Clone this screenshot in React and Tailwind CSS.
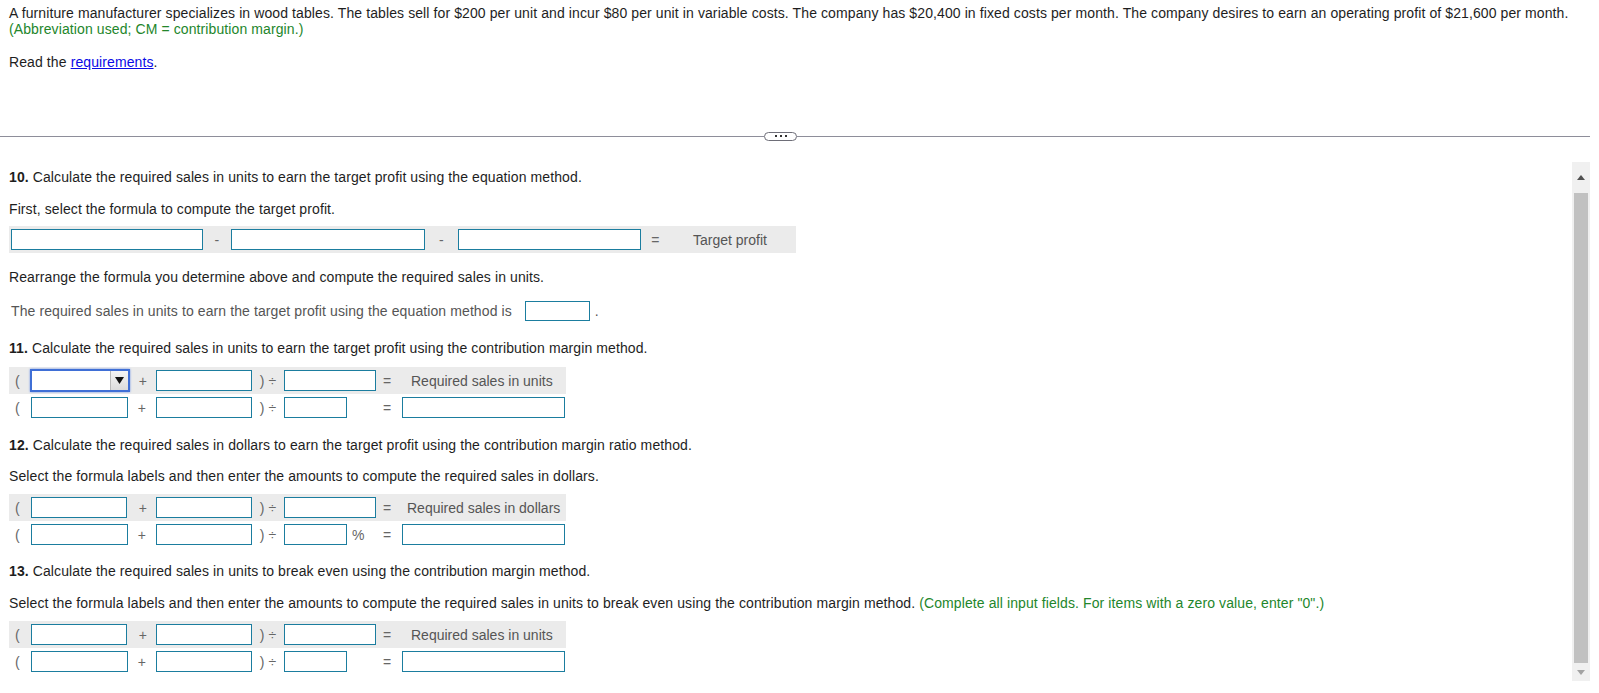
import React from "react";

const Box = ({ w, h = "h-[21px]" }) => (
  <div className={`${w} ${h} border border-[#1b7d9f] bg-white shrink-0`} />
);

const Op = ({ w, children, cls = "justify-center" }) => (
  <div className={`${w} flex ${cls} shrink-0 text-[#666]`}>{children}</div>
);

function SelectBox() {
  return (
    <div className="w-[100px] h-[23px] shrink-0 border-2 border-[#3f6fd6] bg-white flex justify-end shadow-[0_0_2px_#6f93e6]">
      <div className="w-[18px] h-full bg-gradient-to-b from-[#f4f4f4] to-[#dcdcdc] border-l border-[#b9b9b9] flex items-center justify-center">
        <svg width="9" height="7" viewBox="0 0 9 7">
          <polygon points="0,0 9,0 4.5,7" fill="#111" />
        </svg>
      </div>
    </div>
  );
}

// top line of a CM formula (gray row)
function FormulaTop({ label, labelPad = "pl-[9px]", first }) {
  return (
    <div className="w-[557px] h-[27px] bg-[#ebebeb] flex items-center">
      <Op w="w-[21px]" cls="pl-[6px]">(</Op>
      {first || <Box w="w-[96px] ml-[1px] mr-[3px]" />}
      <Op w="w-[26px]">+</Op>
      <Box w="w-[96px]" />
      <Op w="w-[32px]">)&nbsp;÷</Op>
      <Box w="w-[92px]" />
      <Op w="w-[26px]" cls="pl-[7px]">=</Op>
      <div className={`${labelPad} text-[#555] whitespace-nowrap tracking-normal`}>{label}</div>
    </div>
  );
}

function FormulaBottom({ pct }) {
  return (
    <div className="w-[557px] h-[27px] flex items-center">
      <Op w="w-[22px]" cls="pl-[6px]">(</Op>
      <Box w="w-[97px]" />
      <Op w="w-[28px]">+</Op>
      <Box w="w-[96px]" />
      <Op w="w-[32px]">)&nbsp;÷</Op>
      <Box w="w-[63px]" />
      <Op w="w-[29px]" cls="pl-[5px] justify-start">{pct ? "%" : ""}</Op>
      <Op w="w-[26px]" cls="pl-[7px]">=</Op>
      <Box w="w-[163px]" />
    </div>
  );
}

function Scrollbar() {
  return (
    <div className="w-[18px] h-full bg-[#f0f0f0] flex flex-col items-center">
      <div className="h-[31px] flex items-center justify-center">
        <svg width="8" height="5" viewBox="0 0 8 5">
          <polygon points="4,0 8,5 0,5" fill="#505050" />
        </svg>
      </div>
      <div className="w-[14px] flex-1 bg-[#c1c1c1]" />
      <div className="h-[18px] flex items-center justify-center">
        <svg width="8" height="5" viewBox="0 0 8 5">
          <polygon points="0,0 8,0 4,5" fill="#a3a3a3" />
        </svg>
      </div>
    </div>
  );
}

export default function App() {
  return (
    <div className="w-[1599px] h-[693px] bg-white overflow-hidden font-['Liberation_Sans',Arial,sans-serif] text-[14px] leading-[16px] tracking-[0.1px] text-[#1e1e1e]">
      <div className="h-[130px] pl-[9px] pt-[5px]">
        <p>
          A furniture manufacturer specializes in wood tables. The tables sell for $200 per unit and incur $80 per unit in
          variable costs. The company has $20,400 in fixed costs per month. The company desires to earn an operating profit
          of $21,600 per month.
        </p>
        <p className="text-[#23862b]">(Abbreviation used; CM = contribution margin.)</p>
        <p className="mt-[17px]">
          Read the <span className="text-[#0a0ae6] underline">requirements</span>.
        </p>
      </div>

      <div className="w-[1590px] h-[12px] flex items-center">
        <div className="w-[764px] h-px bg-[#8e8e9a]" />
        <div className="w-[33px] h-[9px] rounded-full border border-[#6e6e78] bg-white flex items-center justify-center gap-[3px]">
          <span className="w-[2px] h-[2px] bg-[#333]" />
          <span className="w-[2px] h-[2px] bg-[#333]" />
          <span className="w-[2px] h-[2px] bg-[#333]" />
        </div>
        <div className="flex-1 h-px bg-[#8e8e9a]" />
      </div>

      <div className="mt-[20px] w-[1590px] h-[519px] flex">
        <div className="flex-1 overflow-hidden pt-[7px] pl-[9px]">
          <p>
            <b>10.</b> Calculate the required sales in units to earn the target profit using the equation method.
          </p>
          <p className="mt-[16px]">First, select the formula to compute the target profit.</p>
          <div className="mt-[9px] w-[787px] h-[27px] bg-[#ebebeb] flex items-center pl-[2px]">
            <Box w="w-[192px]" />
            <Op w="w-[28px]">-</Op>
            <Box w="w-[194px]" />
            <Op w="w-[33px]">-</Op>
            <Box w="w-[183px]" />
            <Op w="w-[29px]">=</Op>
            <div className="pl-[23px] text-[#555] tracking-normal">Target profit</div>
          </div>
          <p className="mt-[16px]">Rearrange the formula you determine above and compute the required sales in units.</p>
          <div className="mt-[16px] h-[20px] flex items-center pl-[2px] text-[#555]">
            <span>The required sales in units to earn the target profit using the equation method is</span>
            <Box w="w-[65px] ml-[13px]" h="h-[20px]" />
            <span className="ml-[5px]">.</span>
          </div>
          <p className="mt-[19px]">
            <b>11.</b> Calculate the required sales in units to earn the target profit using the contribution margin method.
          </p>
          <div className="mt-[11px]">
            <FormulaTop label="Required sales in units" first={<SelectBox />} />
            <FormulaBottom />
          </div>
          <p className="mt-[16px]">
            <b>12.</b> Calculate the required sales in dollars to earn the target profit using the contribution margin ratio
            method.
          </p>
          <p className="mt-[15px]">Select the formula labels and then enter the amounts to compute the required sales in dollars.</p>
          <div className="mt-[10px]">
            <FormulaTop label="Required sales in dollars" labelPad="pl-[5px]" />
            <FormulaBottom pct />
          </div>
          <p className="mt-[15px]">
            <b>13.</b> Calculate the required sales in units to break even using the contribution margin method.
          </p>
          <p className="mt-[16px]">
            Select the formula labels and then enter the amounts to compute the required sales in units to break even using
            the contribution margin method.{" "}
            <span className="text-[#23862b]">
              (Complete all input fields. For items with a zero value, enter "0".)
            </span>
          </p>
          <div className="mt-[10px]">
            <FormulaTop label="Required sales in units" />
            <FormulaBottom />
          </div>
        </div>
        <Scrollbar />
      </div>
    </div>
  );
}
